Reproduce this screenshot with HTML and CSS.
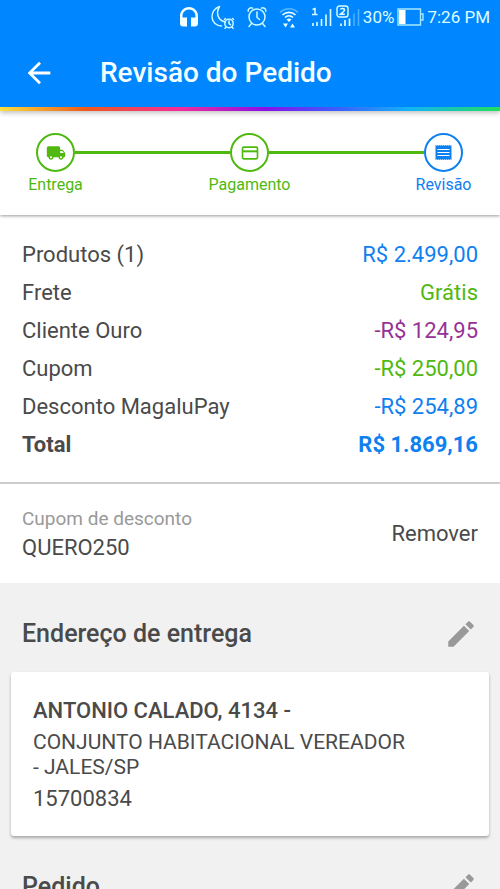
FILE: index.html
```html
<!DOCTYPE html>
<html lang="pt-BR">
<head>
<meta charset="utf-8">
<meta name="viewport" content="width=device-width, initial-scale=1">
<title>Revisão do Pedido</title>
<link rel="stylesheet" href="styles.css">
</head>
<body>
<div class="app">
  <header class="top">
    <div class="status">
      <svg width="20" height="22" viewBox="0 0 20 22" fill="#f2ffff"><path d="M10 1C4.900 1 1 5 1 10v7.500c0 1.700 1.200 3 2.900 3H8v-9H3.500V10C3.500 6.200 6.400 3.400 10 3.400s6.500 2.800 6.500 6.600v1.500H12v9h4.100c1.700 0 2.900-1.300 2.900-3V10c0-5-3.900-9-9-9z"/></svg>
      <svg width="24" height="24" viewBox="0 0 24 24" fill="none" stroke="#ccfbff" stroke-width="1.500" stroke-linecap="round"><path d="M8.500 1.500C3.500 3 .8 7.500 1 12c.3 5.500 4.500 9 9.500 9M8.500 1.500C4.500 8 7 16 14.500 17"/><circle cx="18" cy="18.500" r="4.200"/><path d="M18 16v2.700l1.500 1M13.500 14.500l1-1M22.500 14.500l-1-1M15 22l-1 1.200M21 22l1 1.200"/></svg>
      <svg width="20" height="22" viewBox="0 0 20 22" fill="none" stroke="#ccfbff" stroke-width="1.500" stroke-linecap="round"><circle cx="10" cy="11" r="8"/><path d="M10 6v5.500l2.500 2M1.200 5.200C.8 3 3.500 1 5.500 2.200M18.800 5.200C19.200 3 16.500 1 14.500 2.200M4.500 17.500L2 20.500M15.500 17.500l2.500 3"/></svg>
      <svg width="20" height="24" viewBox="0 0 20 24" fill="none" stroke="#eaffff" stroke-width="1.700"><path d="M1 7.500c5-5 13-5 18 0" stroke="#54b8ff"/><path d="M3.500 10c3.700-3.600 9.300-3.600 13 0M6 12.500c2.300-2.200 5.700-2.200 8 0"/><path d="M7.500 14.500q2.500-1.800 5 0L10 17z" fill="#eaffff" stroke="none"/><path d="M4 18.500h5l-2.500 4zM11 22.500h5l-2.500-4z" fill="#eaffff" stroke="none"/></svg>
      <svg width="22" height="22" viewBox="0 0 22 22"><g fill="none" stroke="#dcffff" stroke-width="1.600"><path d="M1.500 3.500l2.500-1V8.500M1 8.500h5.500" stroke-width="1.500"/><path d="M2 20v-3M6 20v-4M10.500 20v-7M15 20V8.500M19.500 20V3"/></g></svg>
      <svg width="24" height="24" viewBox="0 0 24 24"><g fill="none" stroke="#dcffff"><rect x="1" y="1" width="11" height="11" rx="2.500" stroke-width="1.400"/><path d="M4.500 4.600q0-1.200 2-1.200t2 1.500q0 1-4 4.300h4.300" stroke-width="1.500"/><path d="M5 21v-2.500M9 21v-6M13.500 21v-7.500" stroke-width="1.700"/><path d="M18 21V8.500M22.500 21V4" stroke="#48b0ff" stroke-width="1.600"/></g></svg>
      <span>30%</span>
      <svg width="27" height="18" viewBox="0 0 27 18"><path d="M1 1h22.500v16H1zM24 6h2v6h-2" fill="none" stroke="#a5e7ff" stroke-width="1.400"/><path d="M2 2h6.500v14H2z" fill="#fff"/></svg>
      <span>7:26 PM</span>
    </div>
    <div class="appbar">
      <button class="icon-button" type="button" aria-label="Voltar">
        <svg width="34" height="34" viewBox="0 0 24 24" fill="#fff"><path d="M20 11H7.830l5.590-5.590L12 4l-8 8 8 8 1.410-1.410L7.830 13H20v-2z"/></svg>
      </button>
      <h1>Revisão do Pedido</h1>
    </div>
    <div class="rainbow"></div>
  </header>

  <ol class="steps">
    <li class="step">
      <span class="dot"><svg width="20" height="20" viewBox="0 0 24 24" fill="currentColor"><path d="M19.500 8H17V6c0-1.100-.9-2-2-2H3c-1.100 0-2 .9-2 2v9c0 1.100.9 2 2 2 0 1.660 1.340 3 3 3s3-1.340 3-3h6c0 1.660 1.340 3 3 3s3-1.340 3-3h1c.55 0 1-.45 1-1v-3.330c0-.43-.14-.86-.4-1.200L20.300 8.400c-.19-.25-.49-.4-.8-.4zM6 18.200c-.66 0-1.200-.54-1.200-1.200s.54-1.200 1.200-1.200 1.200.54 1.200 1.200-.54 1.200-1.200 1.200zM19.500 9.500l1.960 2.500H17V9.500h2.500zM18 18.200c-.66 0-1.200-.54-1.200-1.200s.54-1.200 1.200-1.200 1.200.54 1.200 1.200-.54 1.200-1.200 1.200z"/></svg></span>
      <span class="step-label">Entrega</span>
    </li>
    <li class="line" aria-hidden="true"></li>
    <li class="step">
      <span class="dot"><svg width="20" height="20" viewBox="0 0 24 24" fill="none" stroke="currentColor" stroke-width="2"><rect x="3" y="5" width="18" height="14" rx="1.500"/><path d="M3 10h18" stroke-width="2.400"/></svg></span>
      <span class="step-label">Pagamento</span>
    </li>
    <li class="line" aria-hidden="true"></li>
    <li class="step current">
      <span class="dot"><svg width="17" height="17" viewBox="0 0 17 17"><path fill="currentColor" d="M.5 1l1 .8 1-.8 1 .8 1-.8 1 .8 1-.8 1 .8 1-.8 1 .8 1-.8 1 .8 1-.8 1 .8 1-.8 1 .8 1-.8v15l-1-.8-1 .8-1-.8-1 .8-1-.8-1 .8-1-.8-1 .8-1-.8-1 .8-1-.8-1 .8-1-.8-1 .8-1-.8-1 .8z"/><path d="M2.500 5.500h12M2.500 8.500h12M2.500 11.500h12" stroke="#fff" stroke-width="1.100"/></svg></span>
      <span class="step-label">Revisão</span>
    </li>
  </ol>

  <main>
    <dl class="summary">
      <div class="row"><dt>Produtos (1)</dt><dd class="blue">R$ 2.499,00</dd></div>
      <div class="row"><dt>Frete</dt><dd class="green">Grátis</dd></div>
      <div class="row"><dt>Cliente Ouro</dt><dd class="purple">-R$ 124,95</dd></div>
      <div class="row"><dt>Cupom</dt><dd class="green">-R$ 250,00</dd></div>
      <div class="row"><dt>Desconto MagaluPay</dt><dd class="blue">-R$ 254,89</dd></div>
      <div class="row total"><dt>Total</dt><dd class="blue">R$ 1.869,16</dd></div>
    </dl>

    <section class="coupon">
      <div class="coupon-text">
        <p class="hint">Cupom de desconto</p>
        <p>QUERO250</p>
      </div>
      <button class="text-button" type="button">Remover</button>
    </section>

    <section class="block">
      <div class="block-head">
        <h2>Endereço de entrega</h2>
        <button class="icon-button" type="button" aria-label="Editar endereço">
          <svg width="34" height="34" viewBox="0 0 24 24" fill="#999"><path d="M3 17.250V21h3.750L17.810 9.940l-3.750-3.750L3 17.250zM20.710 7.040c.39-.39.39-1.020 0-1.410l-2.340-2.340c-.39-.39-1.020-.39-1.410 0l-1.830 1.830 3.750 3.750 1.830-1.830z"/></svg>
        </button>
      </div>
      <address class="card">
        <strong>ANTONIO CALADO, 4134 -</strong>
        <span class="district">CONJUNTO HABITACIONAL VEREADOR - JALES/SP</span>
        <span>15700834</span>
      </address>
    </section>

    <section class="block">
      <div class="block-head">
        <h2>Pedido</h2>
        <button class="icon-button" type="button" aria-label="Editar pedido">
          <svg width="34" height="34" viewBox="0 0 24 24" fill="#999"><path d="M3 17.250V21h3.750L17.810 9.940l-3.750-3.750L3 17.250zM20.710 7.040c.39-.39.39-1.020 0-1.410l-2.340-2.340c-.39-.39-1.020-.39-1.410 0l-1.830 1.830 3.750 3.750 1.830-1.830z"/></svg>
        </button>
      </div>
    </section>
  </main>
</div>
</body>
</html>
```
FILE: styles.css
```css
* {
  box-sizing: border-box;
  margin: 0;
  padding: 0;
}

body {
  font-family: Roboto, "Noto Sans", sans-serif;
  font-size: 22px;
  line-height: 26px;
  color: #4a4a4a;
  background: #f1f1f1;
}

.app {
  display: flex;
  flex-direction: column;
  height: 100vh;
  overflow: hidden;
}

svg {
  display: block;
  flex: none;
}

button {
  font: inherit;
  color: inherit;
  background: none;
  border: 0;
  cursor: pointer;
}

.top {
  position: relative;
  z-index: 2;
  background: #0086ff;
  box-shadow: 0 2px 5px rgba(0, 0, 0, 0.25);
}

.status {
  display: flex;
  justify-content: flex-end;
  align-items: center;
  gap: 3px;
  height: 34px;
  padding: 0 10px;
  font-size: 17px;
  color: #dcffff;
}

.status svg:nth-of-type(-n+4) {
  margin-right: 9px;
}

.appbar {
  display: flex;
  align-items: center;
  gap: 44px;
  height: 73px;
  padding: 4px 22px 0;
}

h1 {
  font-size: 28px;
  line-height: 32px;
  font-weight: 500;
  color: #f4ffff;
}

.rainbow {
  height: 4px;
  background: linear-gradient(90deg, #fce040 0%, #f05a18 17%, #f52a9a 36%, #8a10e8 53%, #3d5cff 67%, #12b4f5 82%, #20e05a 100%);
}

.steps {
  position: relative;
  z-index: 1;
  display: flex;
  padding: 22px 37px 20px 36px;
  list-style: none;
  background: #fff;
  box-shadow: 0 1px 3px rgba(0, 0, 0, 0.4);
}

.step {
  display: flex;
  flex-direction: column;
  align-items: center;
  gap: 2px;
  width: 39px;
  color: #50b90f;
}

.current {
  color: #0f80f0;
}

.dot {
  display: grid;
  place-items: center;
  width: 39px;
  height: 39px;
  border: 2px solid;
  border-radius: 50%;
}

.step-label {
  font-size: 16px;
  line-height: 21px;
  white-space: nowrap;
}

.line {
  flex: 1;
  height: 3px;
  margin-top: 18px;
  background: #50b90f;
}

.summary {
  display: grid;
  gap: 12px;
  padding: 27px 22px 24px;
  background: #fff;
}

.row {
  display: flex;
  justify-content: space-between;
}

.blue {
  color: #0f80f0;
}

.green {
  color: #50b90f;
}

.purple {
  color: #963296;
}

.total {
  font-weight: 700;
}

.coupon {
  display: flex;
  justify-content: space-between;
  align-items: center;
  padding: 22px;
  border-top: 2px solid #ccc;
  background: #fff;
}

.coupon-text {
  display: grid;
  gap: 3px;
}

.hint {
  font-size: 19px;
  color: #999;
}

.block-head {
  display: flex;
  justify-content: space-between;
  align-items: center;
  padding: 34px 22px 21px;
}

h2 {
  font-size: 25px;
  line-height: 30px;
  font-weight: 500;
}

.card {
  display: grid;
  gap: 6px;
  margin: 0 11px;
  padding: 26px 22px 24px;
  font-style: normal;
  background: #fff;
  border-radius: 3px;
  box-shadow: 0 2px 3px rgba(0, 0, 0, 0.3);
}

.card strong {
  font-weight: 500;
}

.district {
  max-width: 380px;
  font-size: 21px;
  line-height: 25px;
}
```
